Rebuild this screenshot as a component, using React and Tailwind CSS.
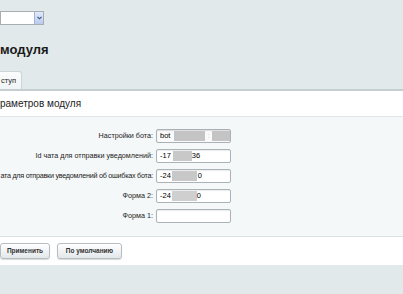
export default function App() {
  const rows = [
    { label: "Настройки бота:", content: (
      <>
        <span>bot</span>
        <span className="ml-[4px] inline-block w-[32px] h-[10px] bg-[#c4c4c4]" />
        <span className="ml-[2px] text-[#bbb]">:</span>
        <span className="ml-[2px] inline-block w-[19px] h-[10px] bg-[#c4c4c4]" />
      </>
    ), first: true },
    { label: "Id чата для отправки уведомлений:", content: (
      <>
        <span>-17</span>
        <span className="ml-[2px] inline-block w-[19px] h-[10px] bg-[#c8c8c8]" />
        <span>36</span>
      </>
    ) },
    { label: "ата для отправки уведомлений об ошибках бота:", tight: true, content: (
      <>
        <span>-24</span>
        <span className="ml-[1px] inline-block w-[25px] h-[10px] bg-[#c8c8c8]" />
        <span className="ml-[1px]">0</span>
      </>
    ) },
    { label: "Форма 2:", content: (
      <>
        <span>-24</span>
        <span className="ml-[1px] inline-block w-[25px] h-[10px] bg-[#cfcfcf]" />
        <span>0</span>
      </>
    ) },
    { label: "Форма 1:", content: null },
  ];

  return (
    <div
      className="w-[403px] h-[294px] overflow-hidden bg-[#e2e9eb] text-black"
      style={{ fontFamily: '"Liberation Sans", Arial, sans-serif' }}
    >
      {/* select */}
      <div className="pt-[11px]">
        <div className="flex w-[44px] h-[14px] border border-[#a6aeb4] bg-white">
          <div className="flex-1" />
          <div className="w-[9px] h-full bg-gradient-to-b from-[#e2eafa] to-[#b8caee] border-l border-[#9fb4de] flex items-center justify-center">
            <svg width="5" height="4" viewBox="0 0 5 4">
              <path d="M0.5 0.8 L2.5 2.8 L4.5 0.8" fill="none" stroke="#3a4f7a" strokeWidth="1.1" />
            </svg>
          </div>
        </div>
      </div>

      {/* title */}
      <div className="mt-[17px] h-[15px] leading-[15px] text-[13px] font-bold text-[#1a1a1a]">модуля</div>

      {/* tab */}
      <div className="mt-[14px] flex">
        <div className="w-[22px] h-[18px] bg-gradient-to-b from-[#fbfcfc] to-[#f1f4f5] border-r border-t border-[#cdd5d8] rounded-tr-[3px] flex items-center text-[7.5px] text-[#222] pl-[1px]">
          ступ
        </div>
      </div>

      {/* panel */}
      <div className="border-t-2 border-[#c5ced1] bg-white">
        <div className="h-[26px] flex items-center text-[10px] text-[#222] border-b border-[#dfe5e8]">
          раметров модуля
        </div>
        <div className="bg-[#f5f8f9] pt-[12px] pb-[13px] flex flex-col gap-[6px] border-b border-[#dbe2e5]">
          {rows.map((r, i) => (
            <div key={i} className="flex items-center h-[14px]">
              <div
                className={
                  "w-[153px] flex justify-end whitespace-nowrap text-[7.2px] text-[#222] " +
                  (r.tight ? "tracking-[-0.25px]" : "")
                }
              >
                {r.label}
              </div>
              <div
                className={
                  "ml-[3px] w-[75px] h-[14px] border rounded-[2px] flex items-center pl-[3px] text-[7.5px] overflow-hidden " +
                  (r.first
                    ? "border-[#a9b1b5] bg-[#fafafa] shadow-[inset_0_1px_1px_rgba(0,0,0,0.12)]"
                    : "border-[#aab3b8] bg-white shadow-[inset_0_1px_1px_rgba(0,0,0,0.08)]")
                }
              >
                {r.content}
              </div>
            </div>
          ))}
        </div>
        <div className="h-[28px] pt-[6px] flex items-start gap-[7px] bg-white">
          <button className="w-[50px] h-[16px] rounded-[3px] border border-[#b5bdc1] bg-gradient-to-b from-white to-[#e3e8ea] shadow-[0_1px_1px_rgba(0,0,0,0.15)] text-[6.5px] font-bold text-[#333] flex items-center justify-center">
            Применить
          </button>
          <button className="w-[65px] h-[16px] rounded-[3px] border border-[#b5bdc1] bg-gradient-to-b from-white to-[#e3e8ea] shadow-[0_1px_1px_rgba(0,0,0,0.15)] text-[6.5px] font-bold text-[#333] flex items-center justify-center">
            По умолчанию
          </button>
        </div>
      </div>
    </div>
  );
}
